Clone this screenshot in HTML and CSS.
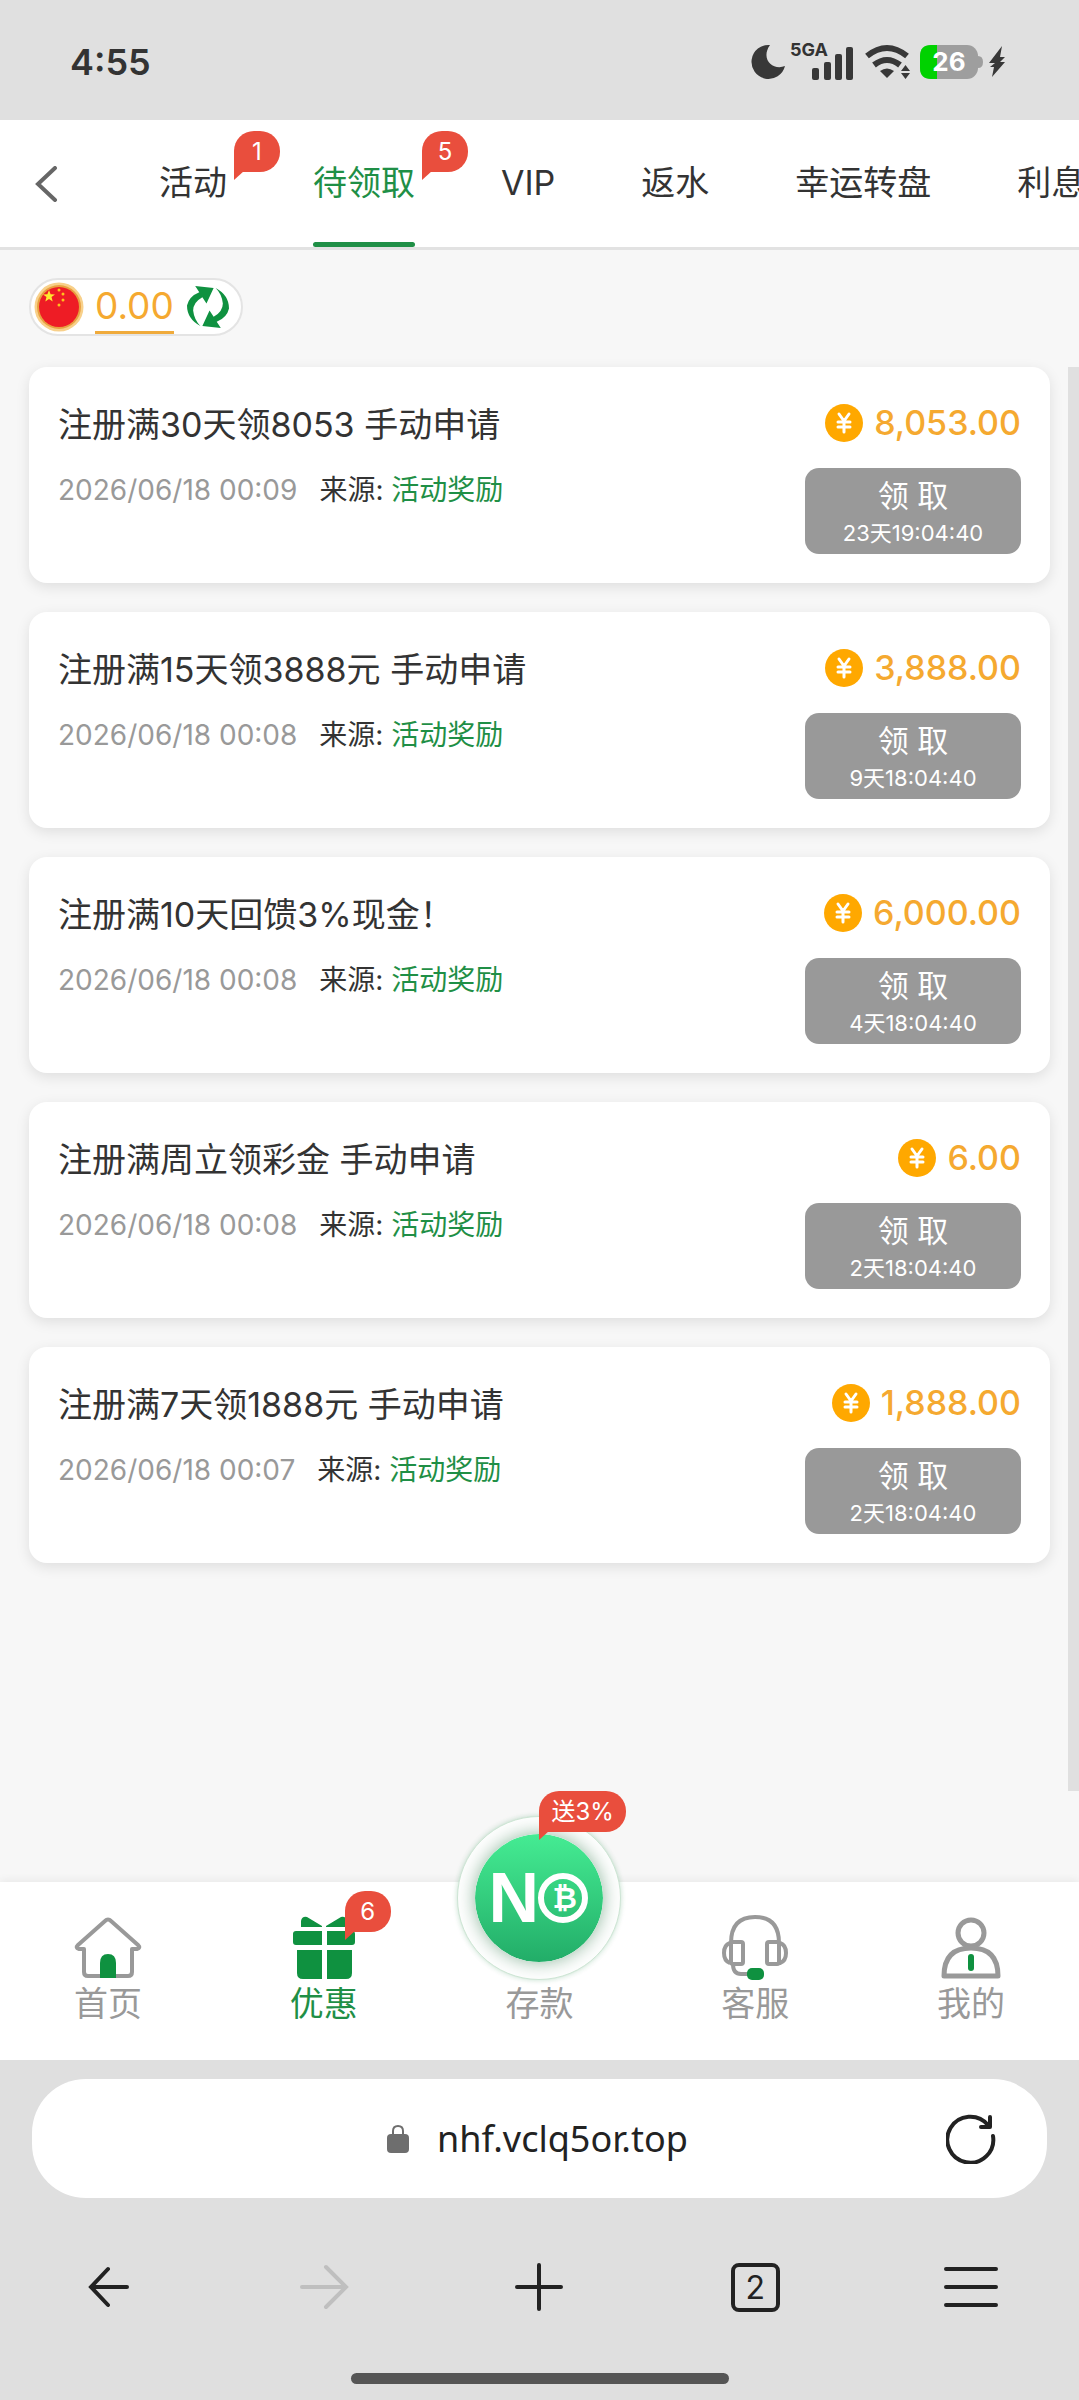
FILE: index.html
```html
<!DOCTYPE html>
<html lang="zh-CN">
<head>
    <meta charset="UTF-8">
    <meta name="viewport" content="width=device-width, initial-scale=1.0">
    <title>待领取</title>
    <link rel="stylesheet" href="styles.css">
</head>
<body>

    <!-- Status bar -->
    <div class="status">
        <span class="clock">4:55</span>
        <div class="status-icons">
            <svg class="moon" width="34" height="36" viewBox="0 0 34 36"><path d="M19 1A17 17 0 1 0 34 22C22 27 9 15 19 1z" fill="#383838"/></svg>
            <span class="signal">
                <svg width="64" height="40" viewBox="0 0 64 40" fill="#383838"><rect x="22" y="26" width="7" height="12" rx="2"/><rect x="34" y="20" width="7" height="18" rx="2"/><rect x="45" y="12" width="7" height="26" rx="2"/><rect x="56" y="5" width="7" height="33" rx="2"/></svg>
                <span class="network">5GA</span>
            </span>
            <svg class="wifi" width="46" height="36" viewBox="0 0 46 36"><g fill="none" stroke="#383838" stroke-width="6"><path d="M2 12Q22 -4 42 12"/><path d="M9 21Q22 11 35 21"/></g><path d="M15 27Q22 22 29 27L22 34z" fill="#383838"/><path d="M36 27l4.500-6 4.500 6zM36 29h9l-4.500 6z" fill="#383838"/></svg>
            <span class="battery">
                <svg width="64" height="34" viewBox="0 0 64 34"><rect x="0" y="0" width="58" height="34" rx="11" fill="#9e9e9e"/><path d="M58 11q5 0 5 6t-5 6z" fill="#9e9e9e"/><path d="M11 0h6v34h-6q-11 0-11-11v-12q0-11 11-11z" fill="#00d200"/></svg>
                <span class="level">26</span>
            </span>
            <svg width="16" height="32" viewBox="0 0 16 32"><path d="M13 0L0 17h6l-5 4h4L3 31 16 16h-5l5-5h-5z" fill="#383838"/></svg>
        </div>
    </div>

    <!-- Top tabs -->
    <header class="topbar">
        <button class="back" aria-label="返回">
            <svg width="24" height="36" viewBox="0 0 24 36"><path d="M21 2L4 18l17 16" fill="none" stroke="#666" stroke-width="4" stroke-linecap="round"/></svg>
        </button>
        <nav class="tabs">
            <a class="tab" href="#">活动<span class="badge">1</span></a>
            <a class="tab active" href="#">待领取<span class="badge">5</span></a>
            <a class="tab" href="#">VIP</a>
            <a class="tab" href="#">返水</a>
            <a class="tab" href="#">幸运转盘</a>
            <a class="tab" href="#">利息</a>
        </nav>
    </header>

    <main class="content">
        <div class="wallet">
            <svg width="50" height="50" viewBox="0 0 50 50"><circle cx="25" cy="25" r="24.500" fill="#f8d08a"/><circle cx="25" cy="25" r="22" fill="#e8a040"/><circle cx="25" cy="25" r="20" fill="#ee1c25"/><path d="M15 8l1.600 4.200 4.400.2-3.500 2.700 1.200 4.300-3.700-2.500-3.700 2.500 1.200-4.300L9 12.400l4.400-.2z" fill="#ffe92e"/><g fill="#ffc21c"><circle cx="25" cy="8" r="1.500"/><circle cx="29" cy="12" r="1.500"/><circle cx="29" cy="18" r="1.500"/><circle cx="25" cy="23" r="1.500"/></g></svg>
            <span class="balance">0.00</span>
            <button class="refresh" aria-label="刷新余额">
                <svg width="42" height="42" viewBox="0 0 41 41"><g fill="#0f9140"><path id="turn" d="M8 0L26 2 19 17 15 11Q6 16 6 24 7 33 13 39 0 32 0 19 2 10 12 6z"/><use href="#turn" transform="rotate(180 20.500 20.500)"/></g></svg>
            </button>
        </div>

        <div class="list">
            <article class="card">
                <div class="info">
                    <h2>注册满30天领8053 手动申请</h2>
                    <p><time>2026/06/18 00:09</time><span>来源: <b>活动奖励</b></span></p>
                </div>
                <div class="reward">
                    <div class="amount"><svg class="coin" viewBox="0 0 38 38"><use href="#coin"/></svg>8,053.00</div>
                    <button class="claim">领 取<small>23天19:04:40</small></button>
                </div>
            </article>

            <article class="card">
                <div class="info">
                    <h2>注册满15天领3888元 手动申请</h2>
                    <p><time>2026/06/18 00:08</time><span>来源: <b>活动奖励</b></span></p>
                </div>
                <div class="reward">
                    <div class="amount"><svg class="coin" viewBox="0 0 38 38"><use href="#coin"/></svg>3,888.00</div>
                    <button class="claim">领 取<small>9天18:04:40</small></button>
                </div>
            </article>

            <article class="card">
                <div class="info">
                    <h2>注册满10天回馈3%现金！</h2>
                    <p><time>2026/06/18 00:08</time><span>来源: <b>活动奖励</b></span></p>
                </div>
                <div class="reward">
                    <div class="amount"><svg class="coin" viewBox="0 0 38 38"><use href="#coin"/></svg>6,000.00</div>
                    <button class="claim">领 取<small>4天18:04:40</small></button>
                </div>
            </article>

            <article class="card">
                <div class="info">
                    <h2>注册满周立领彩金 手动申请</h2>
                    <p><time>2026/06/18 00:08</time><span>来源: <b>活动奖励</b></span></p>
                </div>
                <div class="reward">
                    <div class="amount"><svg class="coin" viewBox="0 0 38 38"><use href="#coin"/></svg>6.00</div>
                    <button class="claim">领 取<small>2天18:04:40</small></button>
                </div>
            </article>

            <article class="card">
                <div class="info">
                    <h2>注册满7天领1888元 手动申请</h2>
                    <p><time>2026/06/18 00:07</time><span>来源: <b>活动奖励</b></span></p>
                </div>
                <div class="reward">
                    <div class="amount"><svg class="coin" viewBox="0 0 38 38"><use href="#coin"/></svg>1,888.00</div>
                    <button class="claim">领 取<small>2天18:04:40</small></button>
                </div>
            </article>
            <div class="scrollbar"></div>
        </div>
    </main>

    <!-- Bottom navigation -->
    <nav class="bottom-nav">
        <a href="#">
            <svg width="70" height="64" viewBox="0 0 70 64"><path d="M11 33v23q0 4 4 4h40q4 0 4-4V33h5q4-1 1-4L38 5q-3-3-6 0L5 29q-3 3 1 4z" fill="none" stroke="#999" stroke-width="4" stroke-linejoin="round"/><path d="M27 62V47q0-9 8-9t8 9v15z" fill="#0f9140"/></svg>
            首页
        </a>
        <a class="active" href="#">
            <span class="icon-wrap">
                <svg width="64" height="64" viewBox="0 0 64 64" fill="#0f9140"><path d="M9 11V5q1-5 6-4l15 9v1zM55 11V5q-1-5-6-4l-15 9v1zM1 18q0-3 3-3h26v14H4q-3 0-3-3zM35 15h25q3 0 3 3v8q0 3-3 3H35zM5 34h25v29H11q-6 0-6-6zM35 34h25v23q0 6-6 6H35z"/></svg>
                <span class="badge">6</span>
            </span>
            优惠
        </a>
        <a href="#">
            <span class="deposit">
                <svg width="128" height="128" viewBox="0 0 128 128"><defs><linearGradient id="green" x1="0" y1="0" x2="0" y2="1"><stop offset="0" stop-color="#45ec93"/><stop offset="1" stop-color="#22ad68"/></linearGradient></defs><circle cx="64" cy="64" r="64" fill="url(#green)"/><circle cx="88" cy="64" r="22" fill="none" stroke="#fff" stroke-width="6"/></svg>
                <span class="logo-n">N</span>
                <span class="logo-b">₿</span>
                <span class="badge">送3%</span>
            </span>
            存款
        </a>
        <a href="#">
            <svg width="70" height="66" viewBox="0 0 70 66" fill="none" stroke="#999" stroke-width="4"><path d="M11 29q0-26 24-26t24 26v22"/><rect x="11" y="28" width="12" height="22" rx="2"/><rect x="47" y="28" width="12" height="22" rx="2"/><path d="M10 29q-6 2-6 10t6 10M60 29q6 2 6 10t-6 10M13 50q0 10 8 10h8"/><rect x="27" y="54" width="17" height="12" rx="5" fill="#0f9140" stroke="none"/></svg>
            客服
        </a>
        <a href="#">
            <svg width="64" height="64" viewBox="0 0 64 64"><g fill="none" stroke="#999" stroke-width="5" stroke-linejoin="round"><circle cx="32" cy="17" r="13"/><path d="M5 60q0-28 27-28t27 28z"/></g><rect x="29" y="38" width="6" height="17" rx="3" fill="#0f9140"/></svg>
            我的
        </a>
    </nav>

    <!-- Browser bar -->
    <footer class="browser">
        <div class="address">
            <span class="host">
                <svg width="22" height="28" viewBox="0 0 22 28"><rect x="0" y="9" width="22" height="19" rx="4" fill="#6e6e6e"/><path d="M6 10V6q0-5 5-5t5 5v4" fill="none" stroke="#6e6e6e" stroke-width="2"/></svg>
                nhf.vclq5or.top
            </span>
            <button class="reload" aria-label="刷新">
                <svg width="50" height="50" viewBox="0 0 50 50" fill="none" stroke="#222" stroke-width="4" stroke-linecap="round" stroke-linejoin="round"><path d="M47 22A23 23 0 1 1 42 11"/><path d="M44 3v10h-9"/></svg>
            </button>
        </div>
        <div class="tools">
            <button aria-label="后退"><svg width="50" height="50" viewBox="0 0 50 50"><path d="M44 25H8M25 7L8 25l17 18"/></svg></button>
            <button class="disabled" aria-label="前进" disabled><svg width="50" height="50" viewBox="0 0 50 50"><path d="M3 25h43M27 5l20 20-20 20"/></svg></button>
            <button aria-label="新标签页"><svg width="50" height="50" viewBox="0 0 50 50"><path d="M3 25h44M25 3v44"/></svg></button>
            <button aria-label="标签页"><span class="count">2</span></button>
            <button aria-label="菜单"><svg width="56" height="50" viewBox="0 0 56 50"><path d="M3 7h50M3 25h50M3 43h50"/></svg></button>
        </div>
        <div class="home-indicator"></div>
    </footer>

    <svg class="symbols" width="0" height="0">
        <symbol id="coin" viewBox="0 0 38 38"><circle cx="19" cy="19" r="19" fill="#ffa800"/><path d="M14 10l5 7 5-7M19 17v11M13 18h12M13 23h12" fill="none" stroke="#fff" stroke-width="3" stroke-linecap="round" stroke-linejoin="round"/></symbol>
    </svg>

</body>
</html>
```
FILE: styles.css
```css
* {
    box-sizing: border-box;
}

body {
    font-family: Inter, "Noto Sans CJK SC", sans-serif;
    font-size: 34px;
    color: #333;
    background-color: #f7f7f7;
    display: flex;
    flex-direction: column;
    min-height: 100vh;
    margin: 0;
    overflow-x: hidden;
}

button {
    font-family: inherit;
    background: none;
    border: none;
    padding: 0;
    cursor: pointer;
}

a {
    color: inherit;
    text-decoration: none;
}

svg {
    display: block;
    flex: none;
}

/* Status bar */
.status {
    display: flex;
    justify-content: space-between;
    align-items: center;
    height: 120px;
    padding: 3px 74px 0 70px;
    background-color: #e0e0e0;
}

.clock {
    font-size: 36px;
    font-weight: 600;
}

.status-icons {
    display: flex;
    align-items: center;
    gap: 5px;
}

.signal, .battery {
    position: relative;
}

.network {
    position: absolute;
    top: 0;
    left: 0;
    font-size: 18px;
    line-height: 16px;
    font-weight: 700;
}

.wifi {
    margin: 0 4px 0 6px;
}

.level {
    position: absolute;
    inset: 0 6px 0 0;
    font-size: 26px;
    line-height: 34px;
    font-weight: 700;
    text-align: center;
    color: white;
}

/* Top tabs */
.topbar {
    display: flex;
    height: 130px;
    background-color: white;
    border-bottom: 3px solid #e2e2e2;
}

.back {
    flex: none;
    width: 116px;
    padding-left: 34px;
}

.tabs {
    display: flex;
    flex: 1;
    overflow: hidden;
    white-space: nowrap;
}

.tab {
    position: relative;
    flex: none;
    margin: 0 43px;
    line-height: 126px;
}

.tab.active {
    color: #1f8f46;
}

.tab.active::after {
    content: "";
    position: absolute;
    left: 0;
    right: 0;
    bottom: 0;
    height: 5px;
    border-radius: 3px;
    background-color: #1f8f46;
}

.badge {
    position: absolute;
    min-width: 46px;
    height: 41px;
    padding: 0 12px;
    border-radius: 20px 20px 20px 0;
    background-color: #e94e3d;
    color: white;
    font-size: 24px;
    line-height: 41px;
    text-align: center;
    white-space: nowrap;
}

.badge::after {
    content: "";
    position: absolute;
    left: 0;
    top: 40px;
    border-top: 9px solid #e94e3d;
    border-right: 10px solid transparent;
}

.tab .badge {
    top: 11px;
    left: calc(100% + 7px);
}

/* Content */
.content {
    flex: 1;
}

.wallet {
    display: flex;
    align-items: center;
    width: fit-content;
    height: 58px;
    margin: 28px 29px 31px;
    padding: 0 12px 0 3px;
    background-color: white;
    border: 2px solid #e4e4e4;
    border-radius: 29px;
}

.balance {
    margin: 0 13px 0 11px;
    border-bottom: 3px solid #f0ab3c;
    color: #f5a930;
    font-size: 37px;
    line-height: 51px;
}

.list {
    position: relative;
    display: flex;
    flex-direction: column;
    gap: 29px;
    min-height: 1424px;
    padding: 0 29px;
}

.scrollbar {
    position: absolute;
    top: 0;
    right: 0;
    width: 11px;
    height: 100%;
    background-color: #e0e0e0;
}

.card {
    display: flex;
    justify-content: space-between;
    padding: 29px;
    background-color: white;
    border-radius: 18px;
    box-shadow: 0 4px 14px rgba(0, 0, 0, 0.1);
}

.info h2 {
    margin: 6px 0 22px;
    font-size: 34px;
    line-height: 46px;
    font-weight: 400;
}

.info p {
    display: flex;
    gap: 22px;
    margin: 0;
    font-size: 28px;
    line-height: 40px;
}

.info time {
    color: #999;
}

.info b {
    color: #1f8f46;
    font-weight: 400;
}

.reward {
    display: flex;
    flex-direction: column;
    align-items: flex-end;
    gap: 19px;
}

.amount {
    display: flex;
    align-items: center;
    gap: 11px;
    color: #f5a930;
    font-size: 34px;
    line-height: 53px;
    font-weight: 500;
}

.coin {
    width: 38px;
    height: 38px;
}

.claim {
    width: 216px;
    height: 86px;
    padding-top: 3px;
    border-radius: 14px;
    background-color: #999;
    color: white;
    font-size: 31px;
    line-height: 40px;
}

.claim small {
    display: block;
    font-size: 22px;
    line-height: 34px;
}

/* Bottom navigation */
.bottom-nav {
    display: flex;
    height: 178px;
    margin-top: 90px;
    background-color: white;
    box-shadow: 0 -2px 8px rgba(0, 0, 0, 0.06);
}

.bottom-nav a {
    display: flex;
    flex: 1;
    flex-direction: column;
    align-items: center;
    justify-content: flex-end;
    padding-bottom: 32px;
    color: #999;
    line-height: 48px;
}

.bottom-nav a.active {
    color: #1f8f46;
}

.icon-wrap, .deposit {
    position: relative;
}

.icon-wrap .badge {
    top: -25px;
    left: 53px;
}

.deposit {
    padding: 17px;
    border: 1px solid #cfe6d6;
    border-radius: 50%;
    background-color: white;
    box-shadow: 0 0 5px rgba(31, 143, 70, 0.25);
}

.deposit svg {
    border-radius: 50%;
    box-shadow: 0 0 18px rgba(31, 110, 60, 0.5);
}

.deposit .badge {
    top: -26px;
    left: 81px;
}

.logo-n, .logo-b {
    position: absolute;
    top: 57px;
    left: 30px;
    color: white;
    font-family: "Liberation Sans", sans-serif;
    font-size: 70px;
    font-weight: 700;
}

.logo-b {
    left: 94px;
    font-family: "DejaVu Sans", sans-serif;
    font-size: 30px;
}

/* Browser bar */
.browser {
    height: 340px;
    padding: 19px 32px 0;
    background-color: #dfdfdf;
    color: #222;
}

.address {
    position: relative;
    display: flex;
    align-items: center;
    justify-content: center;
    height: 119px;
    border-radius: 54px;
    background-color: white;
    padding-right: 4px;
}

.host {
    display: flex;
    align-items: center;
    gap: 28px;
    font-family: "Noto Sans", sans-serif;
    font-size: 36px;
}

.reload {
    position: absolute;
    right: 51px;
}

.tools {
    display: flex;
    align-items: center;
    height: 178px;
    margin: 0 -32px;
}

.tools button {
    display: flex;
    flex: 1;
    justify-content: center;
    color: #222;
}

.tools .disabled {
    color: #bfbfbf;
}

.tools svg {
    fill: none;
    stroke: currentColor;
    stroke-width: 4;
    stroke-linecap: round;
}

.count {
    width: 49px;
    height: 49px;
    border: 4px solid #222;
    border-radius: 8px;
    font-size: 32px;
    line-height: 41px;
}

.home-indicator {
    width: 378px;
    height: 11px;
    margin: -3px auto 0;
    border-radius: 6px;
    background-color: #555;
}
```
